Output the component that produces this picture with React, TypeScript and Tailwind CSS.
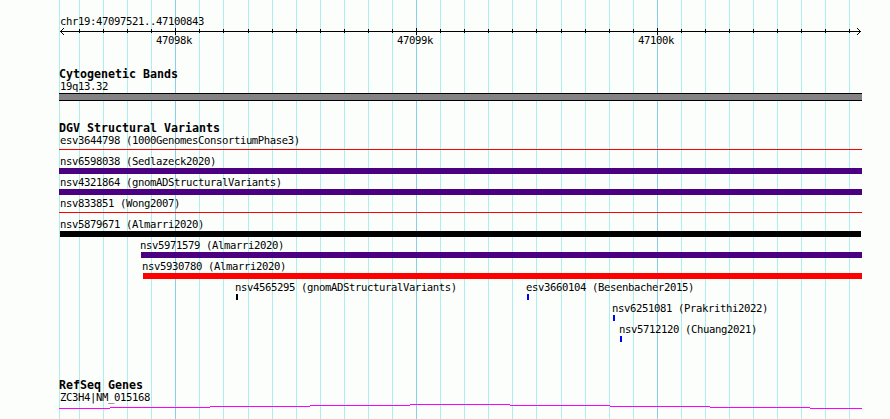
type Feature = {
  label: string;
  width: number;
  color: string;
  thin?: boolean;
  // classes for the feature's box and for its label / bar insets
  box: string;
  labelInset?: string;
  barInset?: string;
};

const MAJOR_LINES = [175, 416, 657];
const MINOR_LINES = [
  79, 103, 127, 151, 199, 223, 248, 272, 296, 320, 344, 368, 392, 440, 464, 488, 512, 536, 561, 585,
  609, 633, 681, 705, 729, 753, 777, 801, 825, 849,
];

const ROWS: Feature[][] = [
  [{ label: 'esv3644798 (1000GenomesConsortiumPhase3)', width: 803, color: 'bg-[#ff0000]', thin: true, box: 'ml-[59px]', labelInset: 'pl-px' }],
  [{ label: 'nsv6598038 (Sedlazeck2020)', width: 803, color: 'bg-[#4b0082]', box: 'ml-[59px]', labelInset: 'pl-px' }],
  [{ label: 'nsv4321864 (gnomADStructuralVariants)', width: 803, color: 'bg-[#4b0082]', box: 'ml-[59px]', labelInset: 'pl-px' }],
  [{ label: 'nsv833851 (Wong2007)', width: 803, color: 'bg-[#ff0000]', thin: true, box: 'ml-[59px]', labelInset: 'pl-px' }],
  [{ label: 'nsv5879671 (Almarri2020)', width: 801, color: 'bg-black', box: 'ml-[60px]' }],
  [{ label: 'nsv5971579 (Almarri2020)', width: 721, color: 'bg-[#4b0082]', box: 'ml-[140px]', barInset: 'pl-px' }],
  [{ label: 'nsv5930780 (Almarri2020)', width: 719, color: 'bg-[#ff0000]', box: 'ml-[142px]', barInset: 'pl-px' }],
  [
    { label: 'nsv4565295 (gnomADStructuralVariants)', width: 2, color: 'bg-black', box: 'ml-[235px] w-[291px]', barInset: 'pl-px' },
    { label: 'esv3660104 (Besenbacher2015)', width: 2, color: 'bg-[#0000ff]', box: 'w-[200px]', barInset: 'pl-px' },
  ],
  [{ label: 'nsv6251081 (Prakrithi2022)', width: 2, color: 'bg-[#0000ff]', box: 'ml-[612px]', barInset: 'pl-px' }],
  [{ label: 'nsv5712120 (Chuang2021)', width: 2, color: 'bg-[#0000ff]', box: 'ml-[619px]', barInset: 'pl-px' }],
];

const Grid = () => (
  <svg className="absolute inset-0 -z-10" width="890" height="419" shapeRendering="crispEdges">
    {[59, ...MINOR_LINES].map((x) => (
      <rect key={x} x={x} y="0" width="1" height="419" fill="#afeeee" />
    ))}
    {MAJOR_LINES.map((x) => (
      <rect key={x} x={x} y="0" width="1" height="419" fill="#87ceeb" />
    ))}
  </svg>
);

const Ruler = () => (
  <svg className="block h-[9px] w-[890px]" viewBox="0 0 890 9" shapeRendering="crispEdges">
    <rect x="60" y="4" width="801" height="1" />
    {MINOR_LINES.map((x) => (
      <rect key={x} x={x} y="2" width="1" height="4" />
    ))}
    {MAJOR_LINES.map((x) => (
      <rect key={x} x={x} y="1" width="1" height="7" />
    ))}
    {[1, 2, 3].map((d) => (
      <g key={d}>
        <rect x={60 + d} y={4 - d} width="1" height="1" />
        <rect x={60 + d} y={4 + d} width="1" height="1" />
        <rect x={860 - d} y={4 - d} width="1" height="1" />
        <rect x={860 - d} y={4 + d} width="1" height="1" />
      </g>
    ))}
  </svg>
);

const Heading = ({ children }: { children: string }) => (
  <h2 className="h-3 pl-[59px] text-[11.63px] leading-3 font-bold tracking-normal">{children}</h2>
);

const FeatureBox = ({ feature }: { feature: Feature }) => (
  <div className={`shrink-0 ${feature.box}`}>
    <div className={`h-[15px] pt-[2px] leading-3 ${feature.labelInset ?? ''}`}>{feature.label}</div>
    <div className={`h-[6px] ${feature.thin ? 'pt-[2px]' : ''} ${feature.barInset ?? ''}`}>
      <div className={`${feature.color} ${feature.thin ? 'h-px' : 'h-[6px]'}`} style={{ width: feature.width }} />
    </div>
  </div>
);

export default function App() {
  return (
    <main className="relative isolate flex h-[419px] w-[890px] flex-col overflow-hidden bg-[#fcfefc] font-['DejaVu_Sans_Mono',monospace] text-[10.6px] leading-3 tracking-[-0.382px] whitespace-nowrap text-black">
      <Grid />

      <header className="h-[66px] pt-[15px]">
        <div className="h-3 pl-[60px]">chr19:47097521..47100843</div>
        <Ruler />
        <div className="-mt-[2px] flex pl-[156px]">
          <span className="w-[241px]">47098k</span>
          <span className="w-[241px]">47099k</span>
          <span>47100k</span>
        </div>
      </header>

      <section className="h-[54px] pt-[2px]">
        <Heading>Cytogenetic Bands</Heading>
        <div className="h-[13px] pl-[60px]">19q13.32</div>
        <div className="ml-[59px] h-2 w-[803px] border-y border-black bg-[#848284]" />
      </section>

      <section className="h-[257px] pt-[2px]">
        <Heading>DGV Structural Variants</Heading>
        <div className="-mt-[2px]">
          {ROWS.map((row) => (
            <div key={row[0].label} className="flex h-[21px]">
              {row.map((feature) => (
                <FeatureBox key={feature.label} feature={feature} />
              ))}
            </div>
          ))}
        </div>
      </section>

      <section className="pt-[2px]">
        <Heading>RefSeq Genes</Heading>
        <div className="h-3 pl-[60px]">ZC3H4|NM_015168</div>
        <svg className="block h-3 w-[890px]" viewBox="0 403 890 12" shapeRendering="crispEdges">
          {[408, 407, 406, 405, 404, 405, 406, 407, 408].map((y, i) => {
            const x = i === 0 ? 59 : 10 + i * 100;
            const end = Math.min(110 + i * 100, 862);
            return <rect key={x} x={x} y={y} width={end - x} height="1" fill="#ff00ff" />;
          })}
        </svg>
      </section>
    </main>
  );
}
